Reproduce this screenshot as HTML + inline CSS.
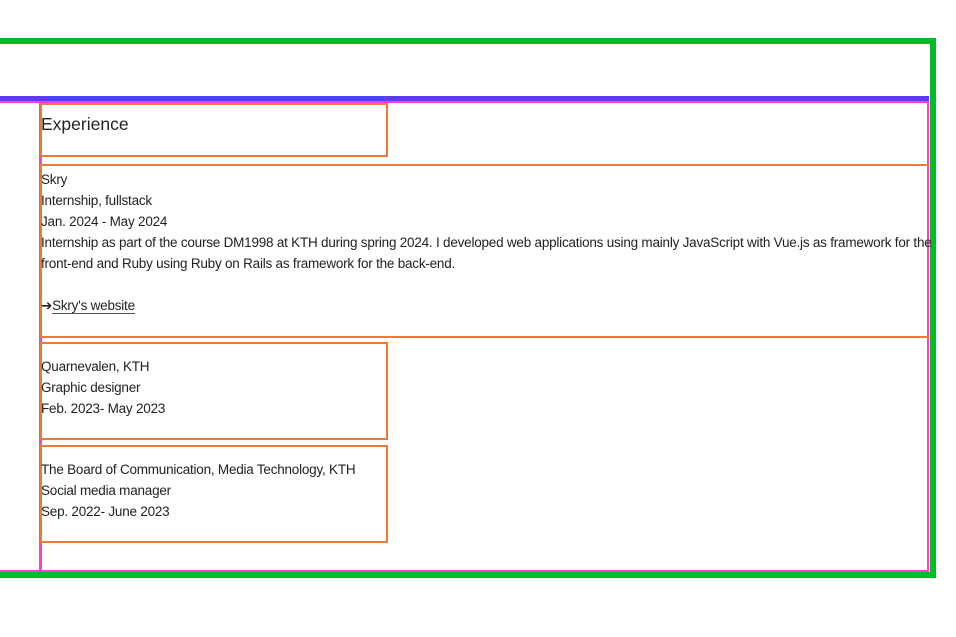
<!DOCTYPE html>
<html><head><style>
body{margin:0;width:956px;height:637px;background:#fff;position:relative;overflow:hidden;font-family:"Liberation Sans",sans-serif;color:#222;}
.a{position:absolute;box-sizing:border-box;}
.t{position:absolute;left:41px;font-size:13.5px;line-height:21px;letter-spacing:-0.22px;white-space:nowrap;}
</style></head><body>
<div class="a" style="left:-10px;top:38px;width:946px;height:540px;border:6px solid #00bd25;"></div>
<div class="a" style="left:0;top:96px;width:929px;height:5px;background:#5b3cf6;"></div>
<div class="a" style="left:39px;top:101px;width:890px;height:471px;border:2px solid #ff3ecb;border-left-width:3px;"></div>
<div class="a" style="left:0;top:570px;width:40px;height:2px;background:#ff3ecb;"></div>
<div class="a" style="left:0;top:101px;width:40px;height:2px;background:#ff3ecb;"></div>
<div class="a" style="left:40px;top:103px;width:348px;height:54px;border:2px solid #ee7a3a;"></div>
<div class="a" style="left:40px;top:164px;width:889px;height:174px;border:2px solid #ee7a3a;border-right:none;"></div>
<div class="a" style="left:40px;top:342px;width:348px;height:98px;border:2px solid #ee7a3a;"></div>
<div class="a" style="left:40px;top:445px;width:348px;height:98px;border:2px solid #ee7a3a;"></div>
<div class="t" style="top:112px;font-size:17.5px;line-height:24px;letter-spacing:0;">Experience</div>
<div class="t" style="top:169px;">Skry<br>Internship, fullstack<br>Jan. 2024 - May 2024<br>Internship as part of the course DM1998 at KTH during spring 2024. I developed web applications using mainly JavaScript with Vue.js as framework for the<br>front-end and Ruby using Ruby on Rails as framework for the back-end.<br><br>➔<span style="border-bottom:1px solid #555;">Skry's website</span></div>
<div class="t" style="top:356px;">Quarnevalen, KTH<br>Graphic designer<br>Feb. 2023- May 2023</div>
<div class="t" style="top:459px;">The Board of Communication, Media Technology, KTH<br>Social media manager<br>Sep. 2022- June 2023</div>
</body></html>
